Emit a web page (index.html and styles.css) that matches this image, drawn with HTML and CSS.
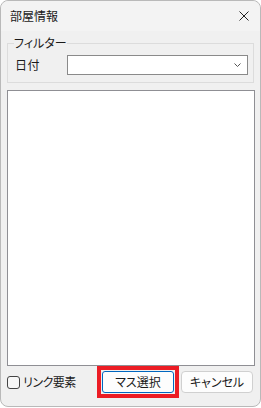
FILE: index.html
```html
<!DOCTYPE html>
<html lang="ja">
<head>
  <meta charset="UTF-8" />
  <meta name="viewport" content="width=device-width, initial-scale=1.0"/>
  <title>部屋情報</title>
  <link rel="stylesheet" href="styles.css">
</head>
<body>
  <div class="window">
    <div class="titlebar">
      <span class="title">部屋情報</span>
      <span class="close">
        <svg width="10" height="10" viewBox="0 0 10 10">
          <path d="M0.5 0.5 L9.5 9.5 M9.5 0.5 L0.5 9.5" stroke="#222" stroke-width="1" fill="none"/>
        </svg>
      </span>
    </div>

    <fieldset class="filter">
      <legend>フィルター</legend>
      <div class="row">
        <label class="row-label">日付</label>
        <div class="combo">
          <svg width="7" height="4" viewBox="0 0 7 4">
            <path d="M0.5 0.5 L3.5 3.5 L6.5 0.5" stroke="#555" stroke-width="1" fill="none"/>
          </svg>
        </div>
      </div>
    </fieldset>

    <div class="listbox"></div>

    <div class="footer">
      <label class="check"><span class="box"></span>リンク要素</label>
      <div class="buttons">
        <div class="highlight">
          <button class="btn btn-default">マス選択</button>
        </div>
        <button class="btn">キャンセル</button>
      </div>
    </div>
  </div>
</body>
</html>
```

FILE: styles.css
```css
body {
  margin: 0;
  background: #ffffff;
  font-family: "Noto Sans CJK JP", "Noto Sans", sans-serif;
  font-size: 12px;
  color: #1a1a1a;
  font-feature-settings: "palt";
}
.window {
  box-sizing: border-box;
  width: 261px;
  height: 407px;
  border: 1px solid #b9b9b9;
  border-radius: 8px;
  background: #f0f0f0;
  display: flex;
  flex-direction: column;
}
.titlebar {
  height: 30px;
  display: flex;
  align-items: center;
  justify-content: space-between;
  padding: 0 11px 0 9px;
  background: #f3f3f3;
  border-radius: 8px 8px 0 0;
}
.title {
  font-size: 12px;
  line-height: 14px;
}
.close {
  display: flex;
}
.filter {
  margin: 5px 6px 0 6px;
  padding: 0 5px 7px 7px;
  border: 1px solid #dcdcdc;
  height: 47px;
  box-sizing: border-box;
  min-width: 0;
}
.filter legend {
  padding: 0;
  margin-left: -1px;
  font-size: 12px;
  line-height: 14px;
}
.row {
  display: flex;
  align-items: center;
  margin-top: 5px;
}
.row-label {
  width: 52px;
  font-size: 12px;
  line-height: 14px;
  letter-spacing: 0.5px;
}
.combo {
  flex: 1;
  height: 20px;
  box-sizing: border-box;
  background: #ffffff;
  border: 1px solid #8a8a8a;
  display: flex;
  align-items: center;
  justify-content: flex-end;
  padding-right: 6px;
}
.listbox {
  margin: 7px 5px 0 6px;
  height: 276px;
  box-sizing: border-box;
  background: #ffffff;
  border: 1px solid #8f8f94;
}
.footer {
  display: flex;
  align-items: center;
  padding: 0 7px 0 6px;
  height: 32px;
}
.check {
  display: flex;
  align-items: center;
  gap: 3px;
  font-size: 12px;
  line-height: 14px;
  letter-spacing: -0.5px;
}
.box {
  width: 13px;
  height: 13px;
  box-sizing: border-box;
  border: 1px solid #444;
  border-radius: 3px;
  background: #f7f7f7;
}
.buttons {
  margin-left: auto;
  display: flex;
  align-items: center;
  gap: 2px;
}
.highlight {
  border: 4px solid #ec1c24;
  padding: 1px;
  display: flex;
}
.btn {
  width: 72px;
  height: 22px;
  box-sizing: border-box;
  background: #fdfdfd;
  border: 1px solid #d0d0d0;
  border-radius: 4px;
  font-family: inherit;
  font-size: 12px;
  line-height: 14px;
  color: #1a1a1a;
  padding: 0;
  font-feature-settings: "palt";
}
.btn-default {
  border: 1px solid #0067c0;
  border-radius: 3px;
}
```
